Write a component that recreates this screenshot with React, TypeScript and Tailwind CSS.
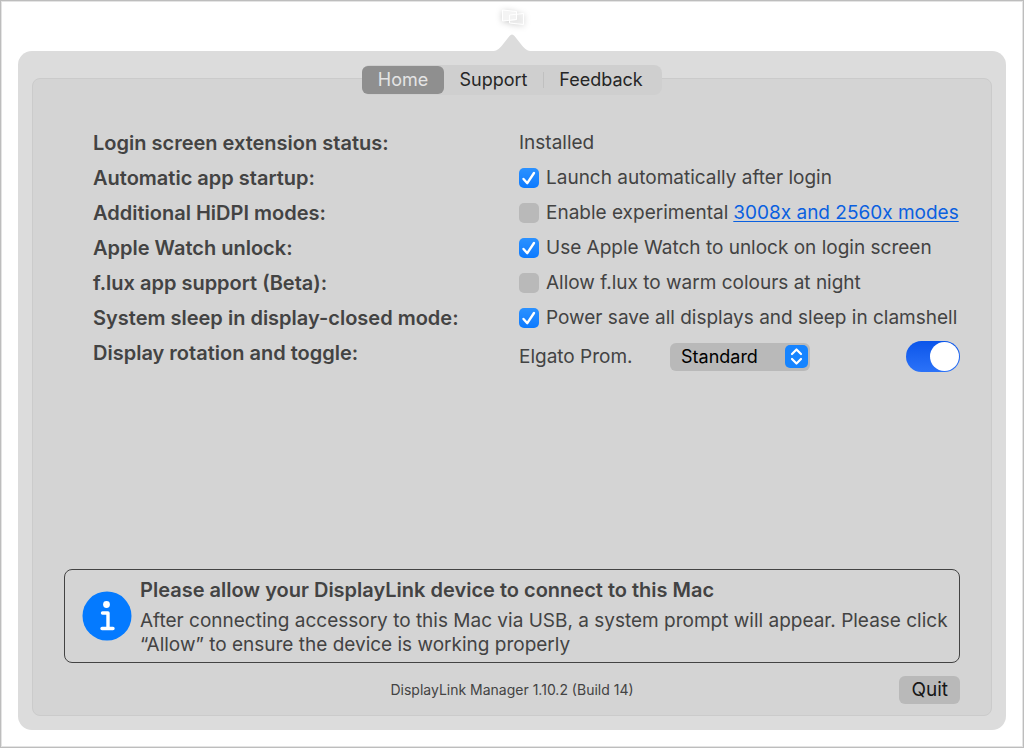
import {useState} from "react";

const tabs = [
    {name: "Home", width: "w-[82px]"},
    {name: "Support", width: "w-[100px]"},
    {name: "Feedback", width: "w-[118px] pr-1"},
]

const options = [
    {
        id: "startup",
        title: "Automatic app startup:",
        text: "Launch automatically after login",
        checked: true
    },
    {
        id: "hidpi",
        title: "Additional HiDPI modes:",
        text: "Enable experimental",
        link: "3008x and 2560x modes",
        checked: false
    },
    {
        id: "watch",
        title: "Apple Watch unlock:",
        text: "Use Apple Watch to unlock on login screen",
        checked: true
    },
    {
        id: "flux",
        title: "f.lux app support (Beta):",
        text: "Allow f.lux to warm colours at night",
        checked: false
    },
    {
        id: "sleep",
        title: "System sleep in display-closed mode:",
        text: "Power save all displays and sleep in clamshell",
        checked: true
    },
]

function MenuBarIcon() {
    return (
        <svg width="28" height="24" viewBox="0 0 28 24" fill="none" className="drop-shadow-[0_1px_3px_rgba(0,0,0,0.2)]" aria-hidden="true">
            <path d="M4.500 5L18.500 6.500V14.500L4.500 16Z" fill="#f4f4f4" stroke="white"/>
            <path d="M11.500 10L25.500 8.500V19.500L11.500 18Z" fill="#f1f1f1" fillOpacity="0.6" stroke="white"/>
            <path d="M18.500 6.500V14.500L11.500 15.300" stroke="white"/>
        </svg>
    )
}

function Checkbox({id, defaultChecked}: { id: string, defaultChecked: boolean }) {
    return (
        <span className="relative grid size-5 shrink-0">
            <input
                id={id}
                type="checkbox"
                defaultChecked={defaultChecked}
                className="peer size-5 appearance-none rounded-[5px] bg-[#b9b9b9] checked:bg-linear-to-b checked:from-[#2b91ff] checked:to-[#0a7aff]"
            />
            <svg viewBox="0 0 20 20" fill="none" className="pointer-events-none absolute inset-0 hidden size-5 peer-checked:block" aria-hidden="true">
                <path d="M4.500 11L8.300 15.200L15 5" stroke="white" strokeWidth="2.400" strokeLinecap="round" strokeLinejoin="round"/>
            </svg>
        </span>
    )
}

export default function App() {
    const [active, setActive] = useState("Home");

    return (
        <div className="flex min-h-screen flex-col border border-[#bdbdbd] bg-white px-[17px] pb-[17px] font-['Inter','Liberation_Sans',sans-serif] text-[19px] leading-6 text-[#434343] shadow-[inset_0_0_0_1px_#e4e4e4]">
            <header className="flex h-[50px] flex-col items-center justify-between pt-1">
                <MenuBarIcon/>
                <svg width="40" height="18" viewBox="0 0 40 18" aria-hidden="true">
                    <path d="M0 18C5 18 7 16 10 12.500L17.500 3Q20 0 22.500 3L30 12.500C33 16 35 18 40 18Z" fill="#dcdcdc"/>
                </svg>
            </header>

            <main className="flex flex-1 flex-col rounded-[14px] bg-[#dcdcdc] p-3.5">
                <nav className="z-10 flex h-[30px] items-center self-center rounded-lg bg-[#cfcfcf] text-[18px] text-[#262626]">
                    {tabs.map(({name, width}, index) => (
                        <button
                            key={name}
                            type="button"
                            onClick={() => setActive(name)}
                            className={`${width} ${name === active
                                ? "h-7 rounded-md bg-[#8f8f8f] text-[#e4e4e4]"
                                : index === 1 ? "h-4 border-r border-[#c0c0c0] leading-4" : "h-7"}`}
                        >
                            {name}
                        </button>
                    ))}
                </nav>

                <section className="-mt-[17px] flex flex-1 flex-col rounded-lg border border-[#cbcbcb] bg-[#d4d4d4] px-[31px] pt-[52px] pb-[11px]">
                    <div className="grid auto-rows-[35px] grid-cols-[426px_1fr] items-start pl-[29px]">
                        <p className="text-[20px] font-semibold">Login screen extension status:</p>
                        <p>Installed</p>
                        {options.map(({id, title, text, link, checked}) => (
                            <div key={id} className="contents">
                                <p className="text-[20px] font-semibold">{title}</p>
                                <div className="flex items-center gap-[7px] whitespace-nowrap">
                                    <Checkbox id={id} defaultChecked={checked}/>
                                    <label htmlFor={id}>{text}</label>
                                    {link && <a href="#modes" className="-ml-0.5 text-[#0a60e0] underline underline-offset-2">{link}</a>}
                                </div>
                            </div>
                        ))}
                        <p className="text-[20px] font-semibold">Display rotation and toggle:</p>
                        <div className="flex items-center">
                            <label htmlFor="rotation" className="w-[151px]">Elgato Prom.</label>
                            <div className="relative">
                                <select
                                    id="rotation"
                                    className="block h-7 w-[140px] appearance-none rounded-md bg-[#b9b9b9] pl-[11px] text-[18px] leading-6 text-black"
                                >
                                    <option>Standard</option>
                                    <option>90°</option>
                                    <option>180°</option>
                                    <option>270°</option>
                                </select>
                                <svg width="23" height="23" viewBox="0 0 23 23" fill="none" className="pointer-events-none absolute top-0.5 right-0.5" aria-hidden="true">
                                    <rect width="23" height="23" rx="5" fill="#1684ff"/>
                                    <path d="M7 9L11.500 4.500L16 9M7 14L11.500 18.500L16 14" stroke="white" strokeWidth="2.200" strokeLinecap="round" strokeLinejoin="round"/>
                                </svg>
                            </div>
                            <input
                                type="checkbox"
                                role="switch"
                                aria-label="Elgato Prom."
                                defaultChecked
                                className="ml-auto flex h-[31px] w-[54px] appearance-none items-center rounded-full bg-[#b9b9b9] p-px after:size-[29px] after:rounded-full after:bg-white checked:justify-end checked:bg-linear-to-b checked:from-[#0a55ea] checked:to-[#2b72f8]"
                            />
                        </div>
                    </div>

                    <aside className="mt-auto flex items-center rounded-lg border border-[#434343] pr-1 pl-[17px]">
                        <svg width="50" height="50" viewBox="0 0 50 50" fill="none" className="mr-2 shrink-0" aria-hidden="true">
                            <circle cx="25" cy="25" r="24.500" fill="#047aff"/>
                            <circle cx="24.500" cy="13.500" r="3.400" fill="white"/>
                            <path d="M20.500 22H26V37M20 37.500H31" stroke="white" strokeWidth="3.400" strokeLinecap="round" strokeLinejoin="round"/>
                        </svg>
                        <div className="pt-2 pb-[5px]">
                            <h2 className="mb-[7px] text-[20px] font-semibold">Please allow your DisplayLink device to connect to this Mac</h2>
                            <p>After connecting accessory to this Mac via USB, a system prompt will appear. Please click “Allow” to ensure the device is working properly</p>
                        </div>
                    </aside>

                    <footer className="mt-[13px] grid grid-cols-[1fr_auto_1fr] items-center">
                        <small className="col-start-2 text-[14px]">DisplayLink Manager 1.10.2 (Build 14)</small>
                        <button type="button" className="h-7 justify-self-end rounded-md bg-[#b9b9b9] px-3 text-[#161616]">Quit</button>
                    </footer>
                </section>
            </main>
        </div>
    )
}
